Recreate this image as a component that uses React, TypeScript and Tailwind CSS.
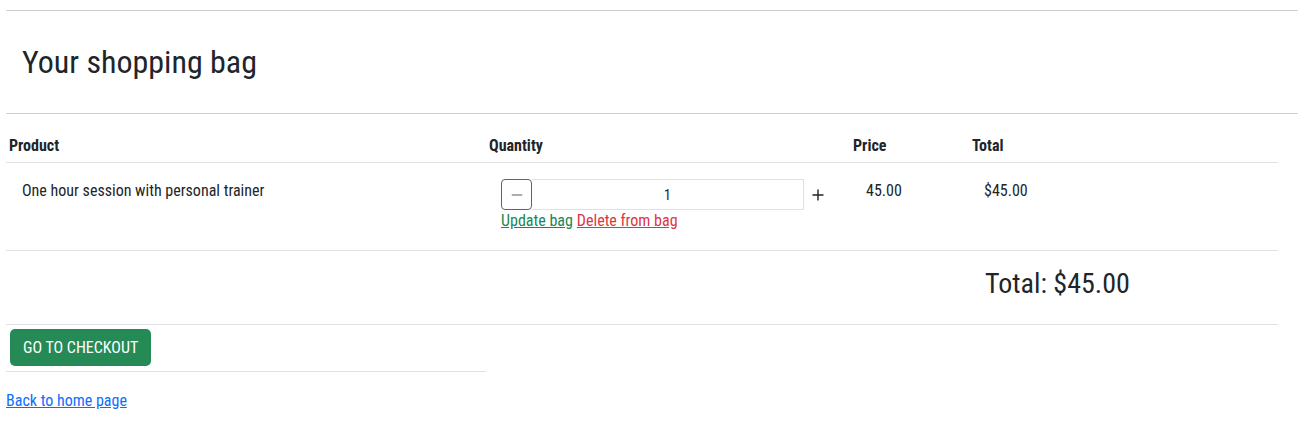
import React from 'react';

const font = { fontFamily: '"Roboto Condensed", Roboto, "Liberation Sans", sans-serif' };

export default function App() {
    return (
        <div className="bg-white text-[#212529] pl-[6px]" style={font}>
            <div className="pt-[10px]">
                <hr className="border-t border-[#cfcfcf]" />
                <h2 className="pl-4 pt-[32px] pb-[32px] text-[32px] leading-[38px] font-normal">
                    Your shopping bag
                </h2>
                <hr className="border-t border-[#cfcfcf]" />
            </div>

            <div className="w-[1272px] mt-[20px]">
                <div className="grid grid-cols-[480px_364px_119px_309px] border-b border-[#dee2e6] h-[29px] items-start text-[16px] leading-[24px] font-bold">
                    <div className="pl-[3px]">Product</div>
                    <div className="pl-[3px]">Quantity</div>
                    <div className="pl-[3px]">Price</div>
                    <div className="pl-[3px]">Total</div>
                </div>

                <div className="grid grid-cols-[480px_364px_119px_309px] border-b border-[#dee2e6] h-[88px] pt-[16px] text-[16px] leading-[24px]">
                    <div className="pl-4">One hour session with personal trainer</div>
                    <div className="pl-[15px]">
                        <div className="flex items-center">
                            <button className="w-[31px] h-[31px] border border-[#5c636a] rounded-[4px] flex items-center justify-center">
                                <svg width="14" height="14" viewBox="0 0 16 16" fill="none">
                                    <path d="M2 8h12" stroke="#5c636a" strokeWidth="1.2" />
                                </svg>
                            </button>
                            <div className="w-[272px] h-[31px] border border-[#dee2e6] border-l-0 flex items-center justify-center text-[14px]">
                                1
                            </div>
                            <button className="ml-[8px] w-[12px] h-[31px] flex items-center justify-center">
                                <svg width="12" height="12" viewBox="0 0 12 12" fill="none">
                                    <path d="M6 0.5v11M0.5 6h11" stroke="#212529" strokeWidth="1.4" />
                                </svg>
                            </button>
                        </div>
                        <div className="flex gap-[4px] text-[16px] leading-[22px]">
                            <a href="#" className="text-[#198754] underline">Update bag</a>
                            <a href="#" className="text-[#dc3545] underline">Delete from bag</a>
                        </div>
                    </div>
                    <div className="pl-4">45.00</div>
                    <div className="pl-[15px]">$45.00</div>
                </div>

                <div className="border-b border-[#dee2e6] h-[74px] pt-[16px] pl-[979px] text-[28px] leading-[34px]">
                    Total: $45.00
                </div>
            </div>

            <div className="w-[480px]">
                <div className="pt-[4px] pb-[5px] pl-[4px] border-b border-[#dee2e6]">
                    <button className="h-[37px] px-[13px] rounded-[5px] bg-[#268a57] text-white text-[16px] font-normal">
                        GO TO CHECKOUT
                    </button>
                </div>
            </div>

            <div className="pt-[17px]">
                <a href="#" className="text-[#0d6efd] underline text-[16px] leading-[24px]">
                    Back to home page
                </a>
            </div>
        </div>
    );
}
